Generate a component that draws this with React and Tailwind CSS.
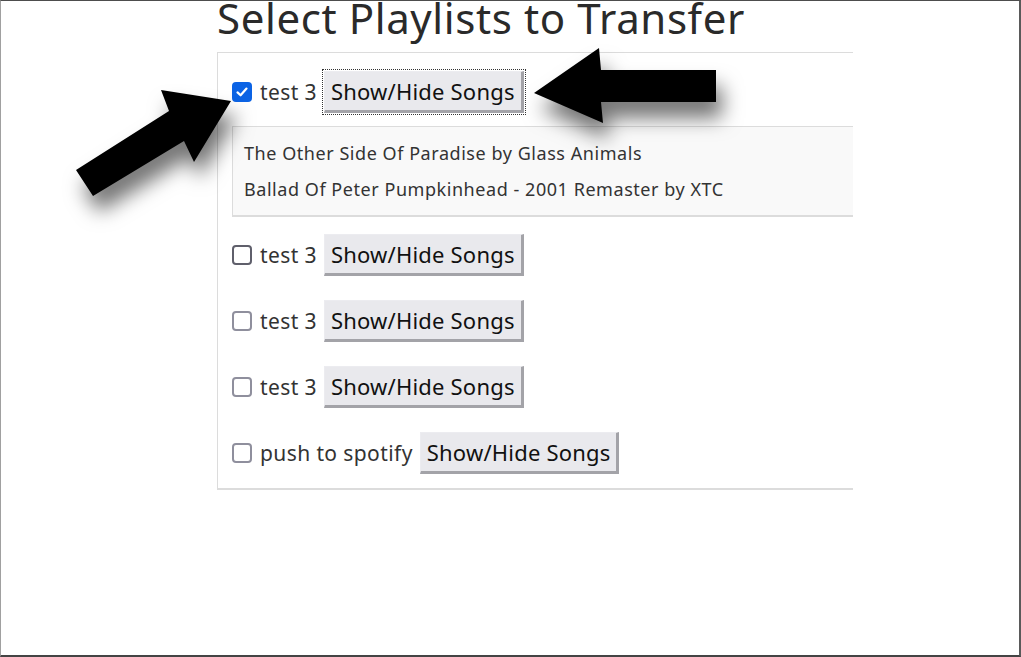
import React from "react";

function Check({ checked, dark }) {
  if (checked) {
    return (
      <span className="flex h-[20px] w-[20px] shrink-0 items-center justify-center rounded-[4px] bg-[#0b63e5]">
        <svg width="14" height="14" viewBox="0 0 14 14">
          <path d="M2.5 7.4 L5.6 10.3 L11.5 3.6" fill="none" stroke="#fff" strokeWidth="2.2" strokeLinecap="round" strokeLinejoin="round" />
        </svg>
      </span>
    );
  }
  return (
    <span
      className={
        "block h-[20px] w-[20px] shrink-0 rounded-[4px] border-2 bg-white " +
        (dark ? "border-[#5f5f6b]" : "border-[#8f8f9d]")
      }
    />
  );
}

function SongButton({ focused }) {
  return (
    <button
      className={
        "ml-[7px] h-[42px] shrink-0 border-t border-l border-t-[#ececf0] border-l-[#ececf0] border-r-[3px] border-b-[3px] border-r-[#a3a3a8] border-b-[#a3a3a8] bg-[#e9e9ed] px-[6px] text-[22px] leading-none tracking-[0.2px] text-[#111] " +
        (focused ? "outline-1 outline-dotted outline-offset-1 outline-[#333]" : "")
      }
    >
      Show/Hide Songs
    </button>
  );
}

function Row({ label, checked, focused, dark }) {
  return (
    <div className="flex items-center">
      <Check checked={checked} dark={dark} />
      <span className="ml-[8px] text-[21px] leading-none tracking-[0.4px] text-[#333]">{label}</span>
      <SongButton focused={focused} />
    </div>
  );
}

export default function App() {
  return (
    <div
      className="relative h-[657px] w-[1021px] overflow-hidden border-t border-l border-r-2 border-b-2 border-t-[#4d4d4d] border-l-[#a0a0a0] border-r-[#5a5a5a] border-b-[#444] bg-white"
      style={{ fontFamily: '"Noto Sans", "Open Sans", sans-serif' }}
    >
      <div className="pl-[216px]">
        <h1 className="-mt-[4px] text-[42px] leading-[42px] font-normal tracking-[0.6px] text-[#2a2a2a]">
          Select Playlists to Transfer
        </h1>
        <div className="mt-[13px] flex w-[636px] flex-col border border-r-0 border-b-2 border-[#dcdcdc] pt-[18px] pb-[14px] pl-[14px]">
          <Row label="test 3" checked focused />
          <div className="mt-[13px] flex flex-col border border-r-0 border-b-2 border-[#dcdcdc] bg-[#f9f9f9] px-[11px] py-[8px] text-[18px] leading-[36px] tracking-[0.55px] text-[#333]">
            <div>The Other Side Of Paradise by Glass Animals</div>
            <div>Ballad Of Peter Pumpkinhead - 2001 Remaster by XTC</div>
          </div>
          <div className="mt-[17px] flex flex-col gap-[24px]">
            <Row label="test 3" dark />
            <Row label="test 3" />
            <Row label="test 3" />
            <Row label="push to spotify" />
          </div>
        </div>
      </div>

      <svg className="pointer-events-none absolute top-0 left-0" width="1021" height="657" viewBox="0 0 1021 657">
        <defs>
          <filter id="sh" x="-50%" y="-50%" width="200%" height="200%">
            <feDropShadow dx="6" dy="16" stdDeviation="10" floodColor="#000" floodOpacity="0.55" />
          </filter>
        </defs>
        <polygon points="533,92 598,47 600,69 715,69 715,101 600,101 602,122" fill="#000" filter="url(#sh)" />
        <polygon points="230,100 160,89 168,110 75,169 92,195 183,140 193,161" fill="#000" filter="url(#sh)" />
      </svg>
    </div>
  );
}
